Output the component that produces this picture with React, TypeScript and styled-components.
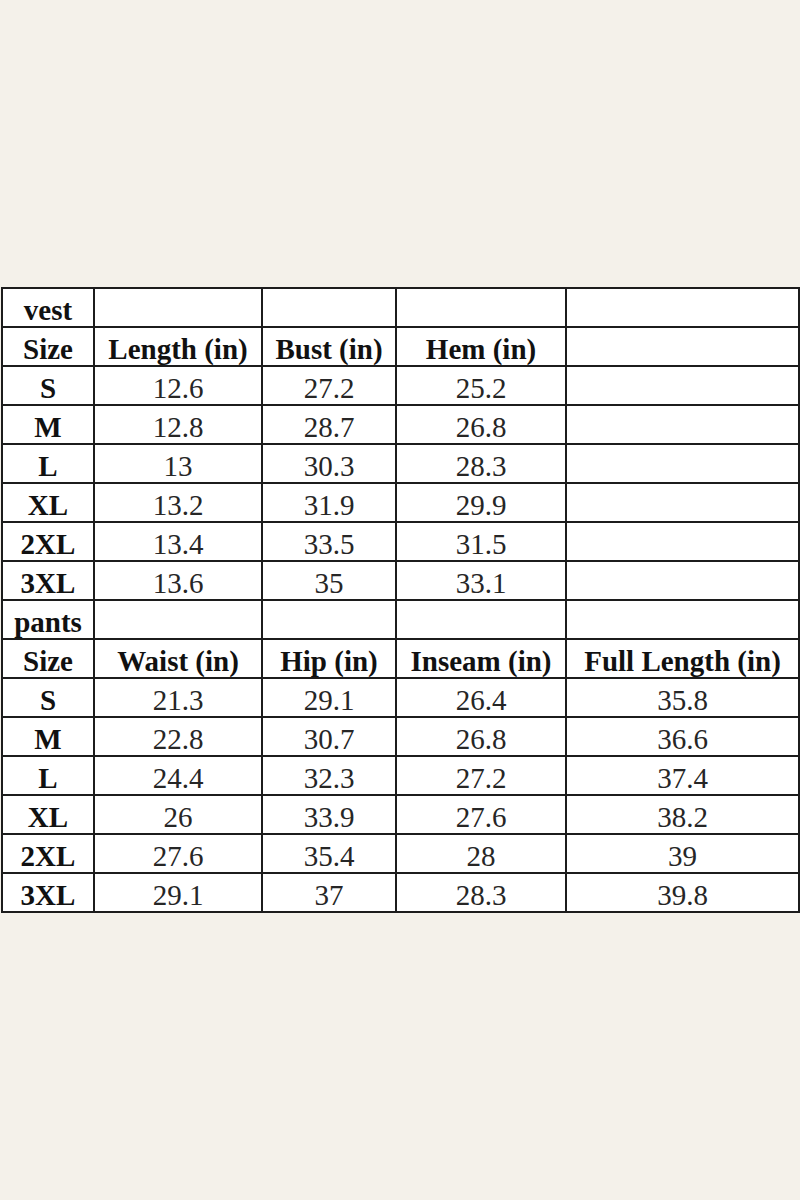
import { ReactElement } from 'react';
import styled, { createGlobalStyle } from 'styled-components';

const GlobalStyle = createGlobalStyle`
  html, body {
    margin: 0;
    padding: 0;
    background: #f4f1ea;
  }
`;

const Page = styled.div`
  width: 800px;
  min-height: 1200px;
  padding-top: 287px;
  box-sizing: border-box;
  background: #f4f1ea;
`;

const Table = styled.table`
  width: 797px;
  margin-left: 1px;
  border-collapse: collapse;
  table-layout: fixed;
  background: #ffffff;
  font-family: 'Liberation Serif', 'Times New Roman', serif;
  color: #1a1a1a;
`;

const Cell = styled.td<{ $bold?: boolean }>`
  height: 39px;
  padding: 0;
  border: 2px solid #1c1c1c;
  box-sizing: border-box;
  font-size: 29px;
  line-height: 32px;
  vertical-align: bottom;
  font-weight: ${(p) => (p.$bold ? 700 : 400)};
  text-align: center;
  white-space: nowrap;
  overflow: hidden;
  color: ${(p) => (p.$bold ? '#111' : '#262626')};
`;

type Section = {
  name: string;
  headers: string[];
  rows: string[][];
};

const sections: Section[] = [
  {
    name: 'vest',
    headers: ['Size', 'Length (in)', 'Bust (in)', 'Hem (in)', ''],
    rows: [
      ['S', '12.6', '27.2', '25.2', ''],
      ['M', '12.8', '28.7', '26.8', ''],
      ['L', '13', '30.3', '28.3', ''],
      ['XL', '13.2', '31.9', '29.9', ''],
      ['2XL', '13.4', '33.5', '31.5', ''],
      ['3XL', '13.6', '35', '33.1', ''],
    ],
  },
  {
    name: 'pants',
    headers: ['Size', 'Waist (in)', 'Hip (in)', 'Inseam (in)', 'Full Length (in)'],
    rows: [
      ['S', '21.3', '29.1', '26.4', '35.8'],
      ['M', '22.8', '30.7', '26.8', '36.6'],
      ['L', '24.4', '32.3', '27.2', '37.4'],
      ['XL', '26', '33.9', '27.6', '38.2'],
      ['2XL', '27.6', '35.4', '28', '39'],
      ['3XL', '29.1', '37', '28.3', '39.8'],
    ],
  },
];

const widths = [92, 168, 134, 170, 233];

export default function App(): ReactElement {
  return (
    <Page>
      <GlobalStyle />
      <Table>
        <colgroup>
          {widths.map((w, i) => (
            <col key={i} style={{ width: w }} />
          ))}
        </colgroup>
        <tbody>
          {sections.map((s) => [
            <tr key={s.name}>
              <Cell $bold>{s.name}</Cell>
              <Cell />
              <Cell />
              <Cell />
              <Cell />
            </tr>,
            <tr key={s.name + '-head'}>
              {s.headers.map((h, i) => (
                <Cell key={i} $bold>
                  {h}
                </Cell>
              ))}
            </tr>,
            ...s.rows.map((r) => (
              <tr key={s.name + r[0]}>
                {r.map((v, i) => (
                  <Cell key={i} $bold={i === 0}>
                    {v}
                  </Cell>
                ))}
              </tr>
            )),
          ])}
        </tbody>
      </Table>
    </Page>
  );
}
